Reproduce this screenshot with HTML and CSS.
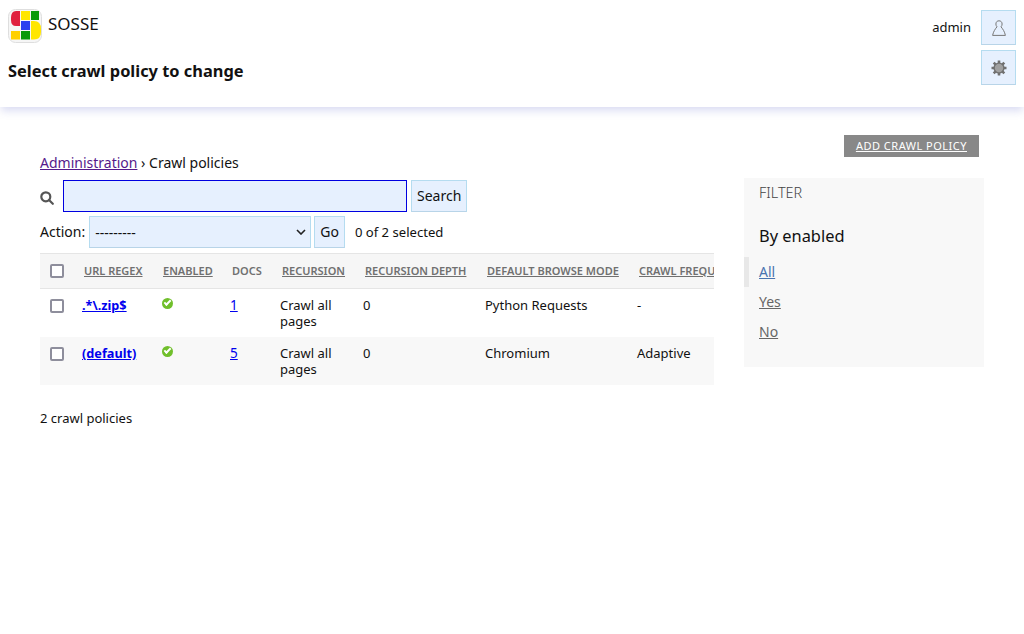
FILE: index.html
```html
<!DOCTYPE html>
<html lang="en">
<head>
  <meta charset="UTF-8">
  <meta name="viewport" content="width=device-width, initial-scale=1.0">
  <title>Select crawl policy to change</title>
  <link rel="stylesheet" href="styles.css">
</head>
<body>
  <header class="top-bar">
    <div class="top-left">
      <a class="brand" href="#">
        <svg class="logo" viewBox="0 0 34 34" width="34" height="34">
          <rect x="0.5" y="0.5" width="33" height="33" rx="7" fill="#f6f6f6" stroke="#dedede"/>
          <path d="M12 2 H8 Q3 2 3 9 V11 Q3 17 8 17 H12 Z" fill="#e0213f"/>
          <rect x="13" y="2" width="9" height="9" fill="#ffe600"/>
          <rect x="23" y="2" width="8" height="9" fill="#0a9a0a"/>
          <rect x="13" y="12" width="9" height="9" fill="#2a3ff0"/>
          <rect x="3" y="22" width="9" height="8.5" fill="#ffd000"/>
          <rect x="13" y="22" width="9" height="8.5" fill="#0a9a0a"/>
          <path d="M23 12 H26 Q33 12 33 20 V23 Q33 30.5 26 30.5 H23 Z" fill="#ffe600"/>
        </svg>
        <span class="brand-name">SOSSE</span>
      </a>
      <h1 class="page-title">Select crawl policy to change</h1>
    </div>
    <div class="top-right">
      <div class="user-row">
        <span class="user-name">admin</span>
        <a class="icon-button" href="#">
          <svg viewBox="0 0 16 16" width="16" height="16" fill="none" stroke="#777" stroke-width="1">
            <path d="M6 6.8 C5.2 6 4.9 5 4.9 4 C4.9 2 6.2 0.8 8 0.8 C9.8 0.8 11.1 2 11.1 4 C11.1 5 10.8 6 10 6.8 C11.8 9 13.6 11.5 14.4 15.4 H1.6 C2.4 11.5 4.2 9 6 6.8 Z"/>
          </svg>
        </a>
      </div>
      <a class="icon-button" href="#">
        <svg viewBox="0 0 16 16" width="16" height="16">
          <g stroke="#707070" stroke-width="2.6">
            <path d="M8 0.5 V15.5 M0.5 8 H15.5 M2.7 2.7 L13.3 13.3 M13.3 2.7 L2.7 13.3"/>
          </g>
          <circle cx="8" cy="8" r="5.6" fill="#707070"/>
          <circle cx="8" cy="8" r="4.2" fill="#a0a0a0"/>
        </svg>
      </a>
    </div>
  </header>

  <main class="content">
    <div class="object-tools">
      <a class="add-link" href="#">ADD CRAWL POLICY</a>
    </div>
    <div class="columns">
      <div class="changelist">
        <div class="breadcrumbs"><a href="#">Administration</a> › Crawl policies</div>
        <form class="search-row">
          <svg class="search-icon" viewBox="0 0 14 14" width="14" height="14" fill="none" stroke="#555" stroke-width="2.2">
            <circle cx="5.8" cy="5.8" r="4.5"/>
            <path d="M9 9 L12.8 12.8" stroke-linecap="round"/>
          </svg>
          <input class="search-input" type="text">
          <button class="btn" type="button">Search</button>
        </form>
        <div class="action-row">
          <label class="action-label">Action:</label>
          <div class="select-box">
            <span>---------</span>
            <svg viewBox="0 0 10 6" width="10" height="6" fill="none" stroke="#222" stroke-width="1.6"><path d="M1 1 L5 5 L9 1"/></svg>
          </div>
          <button class="btn" type="button">Go</button>
          <span class="selected-count">0 of 2 selected</span>
        </div>
        <div class="table-wrap">
          <table class="results">
            <colgroup>
              <col class="col-check"><col class="col-regex"><col class="col-enabled"><col class="col-docs">
              <col class="col-recursion"><col class="col-depth"><col class="col-mode"><col class="col-freq">
            </colgroup>
            <thead>
              <tr>
                <th><span class="check"></span></th>
                <th><a href="#">URL REGEX</a></th>
                <th class="head-enabled"><a href="#">ENABLED</a></th>
                <th class="head-docs"><span>DOCS</span></th>
                <th><a href="#">RECURSION</a></th>
                <th><a href="#">RECURSION DEPTH</a></th>
                <th><a href="#">DEFAULT BROWSE MODE</a></th>
                <th><a href="#">CRAWL FREQUENCY</a></th>
              </tr>
            </thead>
            <tbody>
              <tr>
                <td><span class="check"></span></td>
                <td><a class="name-link" href="#">.*\.zip$</a></td>
                <td><span class="yes-icon"></span></td>
                <td><a class="docs-link" href="#">1</a></td>
                <td>Crawl all pages</td>
                <td>0</td>
                <td>Python Requests</td>
                <td>-</td>
              </tr>
              <tr class="alt">
                <td><span class="check"></span></td>
                <td><a class="name-link" href="#">(default)</a></td>
                <td><span class="yes-icon"></span></td>
                <td><a class="docs-link" href="#">5</a></td>
                <td>Crawl all pages</td>
                <td>0</td>
                <td>Chromium</td>
                <td>Adaptive</td>
              </tr>
            </tbody>
          </table>
        </div>
        <p class="paginator">2 crawl policies</p>
      </div>
      <aside class="filter">
        <h2 class="filter-title">FILTER</h2>
        <h3 class="filter-sub">By enabled</h3>
        <ul class="filter-list">
          <li class="selected"><a href="#">All</a></li>
          <li><a href="#">Yes</a></li>
          <li><a href="#">No</a></li>
        </ul>
      </aside>
    </div>
  </main>
</body>
</html>
```

FILE: styles.css
```css
body{
  margin: 0;
  background-color: white;
  color: #111;
  font-family: "Noto Sans", sans-serif;
  font-size: 13px;
}
.top-bar{
  display: flex;
  justify-content: space-between;
  height: 107px;
  box-sizing: border-box;
  padding: 9px 8px 0 8px;
  background-color: white;
  box-shadow: 0 5px 8px -1px rgba(90, 100, 200, 0.22);
}
.brand{
  display: flex;
  align-items: flex-start;
  gap: 6px;
  color: #111;
  text-decoration: none;
}
.logo{
  display: block;
  filter: blur(0.4px);
}
.brand-name{
  font-size: 17px;
  line-height: 30px;
}
.page-title{
  margin: 16px 0 0 0;
  font-size: 16.4px;
  line-height: 24px;
  font-weight: bold;
}
.top-right{
  display: flex;
  flex-direction: column;
  align-items: flex-end;
  gap: 5px;
  padding-top: 1px;
}
.user-row{
  display: flex;
  align-items: center;
  gap: 10px;
}
.user-name{
  padding-bottom: 2px;
}
.icon-button{
  display: flex;
  align-items: center;
  justify-content: center;
  width: 35px;
  height: 35px;
  box-sizing: border-box;
  background-color: #e6f0fe;
  border: 1px solid #b5dcf0;
  border-bottom-color: #b8d4e8;
}
.content{
  padding: 28px 40px 0 40px;
}
.object-tools{
  display: flex;
  justify-content: flex-end;
  padding-right: 5px;
}
.add-link{
  display: block;
  padding: 0 12px;
  background-color: #888;
  color: white;
  font-size: 11px;
  line-height: 22px;
  letter-spacing: 0.5px;
}
.columns{
  display: flex;
  gap: 30px;
  margin-right: -5px;
}
.changelist{
  width: 674px;
}
.breadcrumbs{
  margin-top: -4px;
  font-size: 14px;
  line-height: 20px;
}
.breadcrumbs a{
  color: #551a8b;
}
.search-row, .action-row{
  display: flex;
  align-items: center;
}
.search-row{
  margin-top: 7px;
}
.search-icon{
  margin-right: 9px;
  margin-top: 4px;
}
.search-input{
  width: 344px;
  height: 32px;
  box-sizing: border-box;
  margin: 0 4px 0 0;
  background-color: #e6f0fe;
  border: 1px solid #0000e0;
}
.btn{
  height: 32px;
  box-sizing: border-box;
  padding: 0 5px 2px 5px;
  background-color: #e6f0fe;
  border: 1px solid #b5dcf0;
  border-bottom-color: #b8d4e8;
  color: #111;
  font-family: "Noto Sans", sans-serif;
  font-size: 14px;
}
.action-row{
  margin-top: 4px;
  font-size: 14px;
}
.action-label{
  padding-bottom: 2px;
}
.select-box{
  display: flex;
  align-items: center;
  justify-content: space-between;
  width: 222px;
  height: 32px;
  box-sizing: border-box;
  margin: 0 3px 0 4px;
  padding: 0 4px 0 5px;
  background-color: #e6f0fe;
  border: 1px solid #b5dcf0;
  border-bottom-color: #b8d4e8;
  font-size: 14px;
}
.selected-count{
  margin-left: 10px;
  font-size: 13.1px;
  padding-bottom: 1px;
}
.table-wrap{
  overflow: hidden;
  margin-top: 5px;
}
.results{
  table-layout: fixed;
  width: 780px;
  border-collapse: collapse;
}
.col-check{ width: 34px; }
.col-regex{ width: 80px; }
.col-enabled{ width: 68px; }
.col-docs{ width: 50px; }
.col-recursion{ width: 83px; }
.col-depth{ width: 122px; }
.col-mode{ width: 152px; }
.col-freq{ width: 191px; }
.results th{
  height: 35px;
  box-sizing: border-box;
  padding: 0 0 1px 10px;
  background-color: #f6f6f6;
  border-top: 1px solid #e5e5e5;
  border-bottom: 1px solid #e5e5e5;
  color: #707070;
  font-size: 11px;
  font-weight: 600;
  text-align: left;
  white-space: nowrap;
}
.results th a{
  color: #707070;
}
.results th.head-enabled{
  padding-left: 9px;
}
.results th.head-docs{
  padding-left: 10px;
}
.results td{
  height: 48px;
  box-sizing: border-box;
  padding: 8px;
  vertical-align: top;
  line-height: 16px;
}
.results td a{
  color: #0000ee;
}
.results tr.alt td{
  background-color: #f8f8f8;
}
.results th:first-child, .results td:first-child{
  padding: 0 0 0 10px;
}
.results td:first-child{
  padding-top: 10px;
}
.results th:first-child{
  vertical-align: middle;
}
.name-link{
  font-weight: bold;
  font-size: 12.7px;
}
.docs-link{
  font-size: 13.5px;
}
.check{
  display: block;
  width: 14px;
  height: 14px;
  box-sizing: border-box;
  background-color: white;
  border: 2px solid #8e8e9c;
  border-radius: 2px;
}
.yes-icon{
  display: block;
  position: relative;
  width: 11px;
  height: 11px;
  margin-top: 1px;
  border-radius: 50%;
  background-color: #70bf2b;
}
.yes-icon::after{
  content: "";
  position: absolute;
  left: 2px;
  top: 2px;
  width: 5px;
  height: 2px;
  border-left: 2px solid white;
  border-bottom: 2px solid white;
  transform: rotate(-45deg);
}
.paginator{
  margin: 24px 0 0 0;
  line-height: 18px;
}
.filter{
  width: 240px;
  height: 189px;
  box-sizing: border-box;
  margin-top: 21px;
  padding: 0 15px;
  background-color: #f8f8f8;
}
.filter-title{
  margin: 0;
  color: #444;
  font-size: 14.4px;
  font-weight: 300;
  line-height: 30px;
}
.filter-sub{
  margin: 17px 0 0 0;
  font-size: 16.4px;
  font-weight: normal;
  line-height: 22px;
}
.filter-list{
  list-style: none;
  margin: 10px 0 0 -15px;
  padding: 0;
  font-size: 14px;
}
.filter-list li{
  height: 30px;
  line-height: 30px;
  padding-left: 15px;
}
.filter-list a{
  color: #666;
}
.filter-list .selected{
  padding-left: 10px;
  border-left: 5px solid #e8e8e8;
}
.filter-list .selected a{
  color: #4a74b0;
}
```
